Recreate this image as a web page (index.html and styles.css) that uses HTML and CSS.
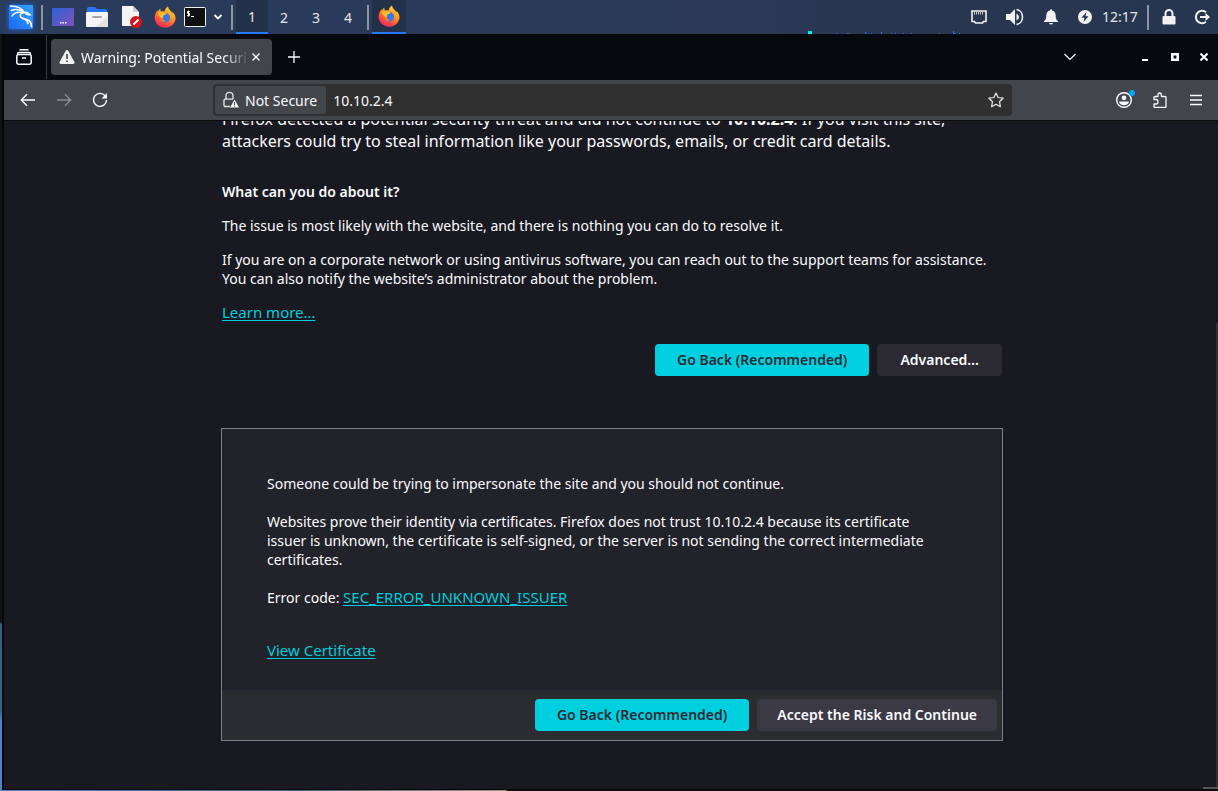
FILE: index.html
```html
<!DOCTYPE html>
<html lang="en">
<head>
    <meta charset="utf-8">
    <title>Warning: Potential Security Risk Ahead</title>
    <link rel="stylesheet" href="styles.css">
</head>
<body>
    <!-- shared icon shapes -->
    <svg class="defs" aria-hidden="true">
        <defs>
            <linearGradient id="kali-bg" x1="0" y1="1" x2="1" y2="0">
                <stop offset="0" stop-color="#1a6cf5"/>
                <stop offset="1" stop-color="#33a0ff"/>
            </linearGradient>
            <linearGradient id="desk-bg" x1="0" y1="0" x2="1" y2="1">
                <stop offset="0" stop-color="#2a63d8"/>
                <stop offset="1" stop-color="#8350b8"/>
            </linearGradient>
            <linearGradient id="fox-body" x1="0.8" y1="0" x2="0.25" y2="1">
                <stop offset="0" stop-color="#ffe040"/>
                <stop offset="0.4" stop-color="#ff9a1f"/>
                <stop offset="0.75" stop-color="#ff4a3d"/>
                <stop offset="1" stop-color="#f0246b"/>
            </linearGradient>
            <symbol id="fox" viewBox="0 0 22 22">
                <path fill="url(#fox-body)" d="M14 .5c.3 2 1.4 3.200 2.700 4.400 1 .9 1.700 1.900 2 2.900 0-.8-.1-1.500-.3-2.100 2 1.900 3.100 4.400 3.100 6.300 0 5.500-4.700 9.700-10.300 9.700S.7 17.500.7 11.700c0-3 1.100-5.600 2.800-7.500l.3 1.400C4.500 4.300 5.400 3.200 6.300 2.500c0 1.300.2 2.200.8 2.900 1-.3 2.500-.2 3.600.1C10.800 3.600 12 1.500 14 .5z"/>
                <circle cx="11" cy="11.800" r="5" fill="#3578ee"/>
                <path fill="#ffbd2e" d="M4 6.500c2-1.200 3.600-.8 5.400.1 1.200.5 2.600.2 3.400 1-.5 1.300-2.800 1.500-3.600 2.500-.5 1 .4 1.900-.8 2.300C5.500 11.700 3.800 9 4 6.500z"/>
                <path fill="#ff7a24" d="M5.600 10.500c1 1.500 2.500 1.600 3.800 1.400-.5 2.100 1.100 3.100 2.700 2.800-1.300 1.800-4.200 1.600-5.500-.1-.8-1.100-1.200-2.600-1-4.100z"/>
            </symbol>
        </defs>
    </svg>

    <!-- desktop panel -->
    <header class="panel">
        <button class="slot kali" aria-label="Applications">
            <svg width="24" height="24" viewBox="0 0 24 24">
                <rect width="24" height="24" rx="1" fill="url(#kali-bg)"/>
                <path fill="none" stroke="#fff" stroke-width="1.400" stroke-linecap="round" d="M1.500 1C7 1 12.500 2.500 15.500 7.500M2.500 5.500C7 3.500 12 5 15.500 7.500M3 11c2.500-3.500 6.500-4.500 10.500-3"/>
                <path fill="none" stroke="#fff" stroke-width="1.600" stroke-linecap="round" d="M15 7.500c2-.8 4.200.3 6 2.300-1.800.3-3-.2-4.200-.9M15 7.500c-3 .5-4.500 2.300-3.300 4.500 1.400 2.300 6 1.500 8.600 3.700 1.600 1.400 2.100 3.500 2.200 6M13.500 13.500c3 .5 5 2 5.500 5"/>
            </svg>
        </button>
        <span class="divider"></span>
        <button class="slot" aria-label="Show desktop">
            <svg width="22" height="18" viewBox="0 0 22 18">
                <rect width="22" height="18" rx="1" fill="url(#desk-bg)"/>
                <path fill="#fff" d="M8 14h1.500v1.500H8zM10.500 14H12v1.500h-1.500zM13 14h1.500v1.500H13z"/>
            </svg>
        </button>
        <button class="slot" aria-label="Files">
            <svg width="22" height="20" viewBox="0 0 22 20">
                <path fill="#2674ef" d="M1 1.500Q1 0 2.500 0H9l2 2h8.500Q21 2 21 3.500V9H1z"/>
                <rect y="5" width="22" height="15" rx="1" fill="#f4f4f4"/>
                <path fill="#e2e2e2" d="M22 9v10q0 1-1 1H10z"/>
                <rect x="6" y="9" width="10" height="2" rx="1" fill="#a5a5a5"/>
            </svg>
        </button>
        <button class="slot" aria-label="Text editor">
            <svg width="22" height="22" viewBox="0 0 22 22">
                <path fill="#f5f5f5" d="M2 0h11l6 6v14H3q-1 0-1-1z"/>
                <path fill="#cfcfcf" d="M13 0v6h6z"/>
                <circle cx="16" cy="16" r="6" fill="#d5161c"/>
                <path d="M13.500 18.500l5-5" stroke="#fff" stroke-width="2"/>
            </svg>
        </button>
        <button class="slot" aria-label="Firefox"><svg width="22" height="22"><use href="#fox"/></svg></button>
        <button class="slot slot-term" aria-label="Terminal">
            <svg width="22" height="20" viewBox="0 0 22 20">
                <rect x="0.500" y="0.500" width="21" height="19" rx="1" fill="#0c1010" stroke="#f0f0f0"/>
                <path fill="none" stroke="#fff" d="M5.800 4.500H3.500v2h2v2.200H3M4.500 3.500v6M7 9.500h3"/>
            </svg>
        </button>
        <button class="slot slot-more" aria-label="More terminals">
            <svg width="10" height="8" viewBox="0 0 10 8"><path d="M1.500 2L5 5.500 8.500 2" fill="none" stroke="#fff" stroke-width="1.800"/></svg>
        </button>
        <span class="divider"></span>
        <nav class="workspaces" aria-label="Workspaces">
            <button class="active">1</button>
            <button>2</button>
            <button>3</button>
            <button>4</button>
        </nav>
        <span class="divider"></span>
        <button class="slot active" aria-label="Firefox window"><svg width="22" height="22"><use href="#fox"/></svg></button>

        <div class="tray">
            <svg class="graph" width="154" height="34" viewBox="0 0 154 34" shape-rendering="crispEdges">
                <path fill="#00f0e0" d="M0 31h4v3H0z"/>
                <path fill="#2a6fe0" d="M28 33h1v1h-1zM39 33h1v1h-1zM41 33h1v1h-1zM57 32h1v2h-1zM63 33h1v1h-1zM73 32h1v2h-1zM83 33h1v1h-1zM87 33h1v1h-1zM95 33h1v1h-1zM103 33h1v1h-1zM131 33h1v1h-1zM145 31h1v2h2v1h-3zM151 33h1v1h-1z"/>
            </svg>
            <button class="slot" aria-label="Network">
                <svg width="16" height="14" viewBox="0 0 16 14">
                    <path fill="none" stroke="#f2f2f2" stroke-width="1.600" d="M1 1h14v10.500h-2.500l-1 1.500h-7l-1-1.500H1z"/>
                    <path stroke="#c4c9d2" d="M3.500 2v2.500M5.500 2v2.500M7.500 2v2.500M9.500 2v2.500M11.500 2v2.500"/>
                </svg>
            </button>
            <button class="slot slot-volume" aria-label="Volume">
                <svg width="18" height="18" viewBox="0 0 18 18">
                    <path fill="#f2f2f2" d="M0 6h4l5-5v16l-5-5H0z"/>
                    <path fill="#f2f2f2" d="M10.500 5.500Q13 7 13 9t-2.500 3.500z"/>
                    <path fill="none" stroke="#f2f2f2" stroke-width="1.600" d="M10.500 1.500C14.500 2 16.500 5.500 16.500 9s-2 7-6 7.500"/>
                </svg>
            </button>
            <button class="slot" aria-label="Notifications">
                <svg width="14" height="16" viewBox="0 0 14 16">
                    <path fill="#f2f2f2" d="M6 1.500V.5h2v1c2.500.4 3.700 2.500 3.700 5 0 3 .6 4.500 2.300 5.500v1H0v-1c1.700-1 2.300-2.500 2.300-5.500 0-2.500 1.200-4.600 3.700-5zM5 14h4q-.5 1.500-2 1.500T5 14z"/>
                </svg>
            </button>
            <button class="slot" aria-label="Power">
                <svg width="14" height="14" viewBox="0 0 14 14">
                    <circle cx="7" cy="7" r="7" fill="#f2f2f2"/>
                    <path fill="#22304a" d="M8.500 2L3.500 7.800h3L5.500 12l5-5.800h-3z"/>
                </svg>
            </button>
            <time class="clock">12:17</time>
            <span class="divider"></span>
            <button class="slot" aria-label="Lock screen">
                <svg width="14" height="16" viewBox="0 0 14 16">
                    <rect x="0.500" y="7" width="13" height="8.500" rx="1" fill="#f2f2f2"/>
                    <path fill="none" stroke="#f2f2f2" stroke-width="2" d="M3.500 8V4.500a3.500 3.500 0 0 1 7 0V8"/>
                </svg>
            </button>
            <button class="slot slot-last" aria-label="Log out">
                <svg width="16" height="16" viewBox="0 0 16 16">
                    <path fill="none" stroke="#f2f2f2" stroke-width="2" d="M12 3.200A6.200 6.200 0 1 0 12 12.800"/>
                    <path fill="#f2f2f2" d="M6 7h5.500V4L16 8l-4.500 4V9H6z"/>
                </svg>
            </button>
        </div>
    </header>

    <div class="window">
        <!-- tabs -->
        <div class="tabbar">
            <button class="recent" aria-label="Recent browsing">
                <svg width="16" height="16" viewBox="0 0 16 16" fill="none" stroke="#fbfbfe" stroke-width="1.500">
                    <path d="M4 .8h8" stroke-linecap="round"/>
                    <path d="M1.500 5q0-1.600 1.500-1.600h10q1.500 0 1.500 1.600"/>
                    <rect x="0.800" y="5.500" width="14.400" height="9.700" rx="2"/>
                    <path d="M6 9h4"/>
                </svg>
            </button>
            <div class="tab">
                <svg width="16" height="16" viewBox="0 0 16 16">
                    <path fill="#f0f0f0" d="M8 1q.9 0 1.400.9l6 11q.7 2-1.200 2.100H1.800Q-.1 14.900.6 12.900l6-11Q7.100 1 8 1z"/>
                    <path stroke="#42454a" stroke-width="1.600" d="M8 5v5M8 11.500V13"/>
                </svg>
                <span class="tab-title">Warning: Potential Security Risk Ahead</span>
                <button class="tab-close" aria-label="Close tab">
                    <svg width="10" height="10" viewBox="0 0 10 10"><path d="M1.500 1.500l7 7M8.500 1.500l-7 7" stroke="#fbfbfe" stroke-width="1.300"/></svg>
                </button>
            </div>
            <button class="new-tab" aria-label="New tab">
                <svg width="12" height="12" viewBox="0 0 12 12"><path d="M6 0v12M0 6h12" stroke="#fbfbfe" stroke-width="1.300"/></svg>
            </button>
            <button class="all-tabs" aria-label="List all tabs">
                <svg width="12" height="8" viewBox="0 0 12 8"><path d="M.5 1L6 6.500 11.500 1" fill="none" stroke="#fbfbfe" stroke-width="1.200"/></svg>
            </button>
            <div class="window-controls">
                <button aria-label="Minimize"><svg width="8" height="8" viewBox="0 0 8 8"><path fill="#fff" d="M1 6h6v2H1z"/></svg></button>
                <button aria-label="Maximize"><svg width="8" height="8" viewBox="0 0 8 8"><path fill="none" stroke="#fff" stroke-width="2.500" d="M1.300 1.300h5.400v5.400H1.300z"/></svg></button>
                <button aria-label="Close"><svg width="8" height="8" viewBox="0 0 8 8"><path stroke="#fff" stroke-width="2" d="M.5.5l7 7M7.500.5l-7 7"/></svg></button>
            </div>
        </div>

        <!-- toolbar -->
        <div class="navbar">
            <button class="tool" aria-label="Back">
                <svg width="16" height="16" viewBox="0 0 16 16" fill="none" stroke="#fbfbfe" stroke-width="1.400"><path d="M15 8H1.500M7 2.300L1.300 8 7 13.700"/></svg>
            </button>
            <button class="tool" aria-label="Forward" disabled>
                <svg width="16" height="16" viewBox="0 0 16 16" fill="none" stroke="#8b8d90" stroke-width="1.400"><path d="M1 8h13.500M9 2.300L14.700 8 9 13.700"/></svg>
            </button>
            <button class="tool" aria-label="Reload">
                <svg width="16" height="16" viewBox="0 0 16 16"><path fill="none" stroke="#fbfbfe" stroke-width="1.400" d="M13 3.700A6.500 6.500 0 1 0 14.500 8"/><path fill="#fbfbfe" d="M15 1v5.500H9.500z"/></svg>
            </button>
            <div class="urlbar">
                <button class="identity">
                    <svg width="16" height="18" viewBox="0 0 16 18">
                        <path fill="none" stroke="#e8e8e8" stroke-width="1.300" d="M3 8V4.800a3.500 3.500 0 0 1 7 0V8M7 15.500H2.300Q1 15.500 1 14.200V9.500Q1 8.200 2.300 8.200H10"/>
                        <path fill="#f5f5f5" d="M11.500 8.500l4.500 8H7z"/>
                        <path stroke="#43464b" d="M11.500 11v3M11.500 14.700v1"/>
                    </svg>
                    Not Secure
                </button>
                <input class="address" type="text" value="10.10.2.4" aria-label="Address">
                <button class="bookmark" aria-label="Bookmark this page">
                    <svg width="16" height="16" viewBox="0 0 16 16"><path fill="none" stroke="#e8e8e8" stroke-width="1.200" stroke-linejoin="round" d="M8 1l2.100 4.500 5 .7-3.600 3.500.9 5L8 12.300l-4.400 2.400.9-5L.9 6.200l5-.7z"/></svg>
                </button>
            </div>
            <button class="tool" aria-label="Account">
                <svg width="22" height="20" viewBox="-1 0 22 20">
                    <circle cx="10" cy="10" r="7.300" fill="none" stroke="#fbfbfe" stroke-width="1.400"/>
                    <circle cx="10" cy="7.800" r="2.400" fill="#fbfbfe"/>
                    <path fill="#fbfbfe" d="M5 11.500h10q-.8 3.800-5 3.800T5 11.500z"/>
                    <circle cx="18" cy="3" r="3" fill="#00a6ff"/>
                </svg>
            </button>
            <button class="tool" aria-label="Extensions">
                <svg width="16" height="16" viewBox="0 0 16 16"><path fill="none" stroke="#fbfbfe" stroke-width="1.300" stroke-linejoin="round" d="M2 7V5.500Q2 4.500 3 4.500h3V3q0-2 1.700-2T9.400 3v1.500H13q1 0 1 1v9q0 1-1 1H3q-1 0-1-1V12h2.500Q6 12 6 9.800T4.500 7.500H2z"/></svg>
            </button>
            <button class="tool" aria-label="Menu">
                <svg width="16" height="16" viewBox="0 0 16 16"><path stroke="#fbfbfe" stroke-width="1.300" d="M2 3.500h12M2 8h12M2 12.500h12"/></svg>
            </button>
        </div>

        <!-- error page -->
        <main class="page">
            <div class="content">
                <p class="intro">Firefox detected a potential security threat and did not continue to <b>10.10.2.4</b>. If you visit this site, attackers could try to steal information like your passwords, emails, or credit card details.</p>
                <h2>What can you do about it?</h2>
                <p>The issue is most likely with the website, and there is nothing you can do to resolve it.</p>
                <p>If you are on a corporate network or using antivirus software, you can reach out to the support teams for assistance. You can also notify the website’s administrator about the problem.</p>
                <p><a href="#">Learn more…</a></p>
                <div class="buttons">
                    <button class="btn btn-primary">Go Back (Recommended)</button>
                    <button class="btn">Advanced…</button>
                </div>
            </div>

            <section class="advanced">
                <div class="advanced-text">
                    <p>Someone could be trying to impersonate the site and you should not continue.</p>
                    <p>Websites prove their identity via certificates. Firefox does not trust 10.10.2.4 because its certificate issuer is unknown, the certificate is self-signed, or the server is not sending the correct intermediate certificates.</p>
                    <p>Error code: <a href="#">SEC_ERROR_UNKNOWN_ISSUER</a></p>
                    <p class="certificate"><a href="#">View Certificate</a></p>
                </div>
                <div class="buttons advanced-buttons">
                    <button class="btn btn-primary">Go Back (Recommended)</button>
                    <button class="btn btn-light">Accept the Risk and Continue</button>
                </div>
            </section>
            <span class="scroll-thumb"></span>
            <span class="scroll-corner"></span>
        </main>
    </div>
</body>
</html>
```
FILE: styles.css
```css
* {
    box-sizing: border-box;
}
body {
    display: flex;
    flex-direction: column;
    height: 100vh;
    margin: 0;
    overflow: hidden;
    background: linear-gradient(#101214 622px, #2e6088 624px, #33658c 712px, #4a86c6 722px) 0 0 / 2px 100% no-repeat, linear-gradient(90deg, #4a86c6, #3a6a98 300px, #a0977c 506px, #101112 507px) 0 100% / 100% 1px no-repeat, #050608;
    color: #fbfbfe;
    font-family: "Noto Sans", sans-serif;
    font-size: 14px;
    line-height: 19px;
}
button, input {
    margin: 0;
    padding: 0;
    border: 0;
    background: none;
    color: inherit;
    font: inherit;
}
button {
    display: flex;
    align-items: center;
    justify-content: center;
}
svg {
    display: block;
    flex: none;
}
.defs {
    position: absolute;
    width: 0;
    height: 0;
}

/* desktop panel */
.panel {
    display: flex;
    flex: none;
    height: 34px;
    padding-left: 4px;
    background: linear-gradient(90deg, #2a3c5c, #2b3857 60%, #29364f 80%, #263650);
}
.slot {
    width: 34px;
    height: 34px;
}
.kali svg {
    box-shadow: 0 0 5px #1f6fff;
}
.slot-term {
    width: 26px;
}
.slot-more {
    width: 20px;
}
.slot-volume {
    width: 38px;
}
.slot-last {
    width: 32px;
}
.divider {
    width: 2px;
    height: 25px;
    margin: 5px 3px;
    background: #8d94a0;
}
.workspaces {
    display: flex;
    color: #e4e6ea;
}
.workspaces button {
    width: 32px;
}
.panel .active {
    background: #22304a;
    border-bottom: 2px solid #2777ff;
}
.tray {
    display: flex;
    margin-left: auto;
}
.clock {
    width: 42px;
    line-height: 34px;
    color: #e4e6ea;
}

/* browser window */
.window {
    display: flex;
    flex: 1;
    flex-direction: column;
    min-height: 0;
    margin: 0 0 2px 4px;
}
.tabbar {
    display: flex;
    flex: none;
    align-items: center;
    height: 46px;
    background: #060a0e;
}
.recent {
    width: 43px;
    height: 44px;
    padding-right: 2px;
    border-right: 1px solid #3c3f43;
}
.tab {
    display: flex;
    align-items: center;
    width: 221px;
    height: 36px;
    margin-left: 4px;
    padding: 0 9px 0 8px;
    border-radius: 4px;
    background: #42454a;
}
.tab-title {
    flex: 1;
    margin-left: 6px;
    overflow: hidden;
    white-space: nowrap;
    mask-image: linear-gradient(90deg, #000 85%, transparent);
}
.tab-close {
    width: 14px;
    height: 20px;
}
.new-tab {
    width: 36px;
    height: 36px;
    margin-left: 4px;
}
.all-tabs {
    width: 36px;
    height: 36px;
    margin-left: auto;
}
.window-controls {
    display: flex;
    margin-left: 42px;
}
.window-controls button {
    width: 30px;
    height: 30px;
}
.window-controls button:last-child {
    width: 28px;
}
.navbar {
    display: flex;
    flex: none;
    align-items: center;
    height: 41px;
    padding: 0 4px 0 6px;
    border-bottom: 1px solid #0c0c0d;
    background: #42454a;
}
.tool {
    width: 36px;
    height: 32px;
}
.urlbar {
    display: flex;
    flex: 1;
    align-items: center;
    height: 32px;
    margin: 0 94px 0 95px;
    padding: 2px;
    border-radius: 4px;
    background: #303030;
}
.identity {
    gap: 6px;
    height: 28px;
    padding: 0 9px 0 8px;
    border-radius: 3px;
    background: #43464b;
}
.address {
    flex: 1;
    min-width: 0;
    padding-left: 7px;
}
.bookmark {
    width: 28px;
    height: 28px;
}

/* error page */
.page {
    position: relative;
    display: flex;
    flex: 1;
    flex-direction: column;
    justify-content: flex-end;
    align-items: center;
    min-height: 0;
    padding: 0 0 48px 2px;
    overflow: hidden;
    background: #191a21;
}
.page p {
    margin: 0 0 15px;
}
.content {
    width: 100%;
    max-width: 780px;
}
.page .intro {
    margin-bottom: 30px;
    font-size: 16px;
    line-height: 22px;
}
h2 {
    margin: 0 0 15px;
    font-size: 14px;
    font-weight: 600;
}
a {
    color: #00cddb;
    font-size: 15px;
    text-underline-offset: 2px;
}
.buttons {
    display: flex;
    justify-content: flex-end;
    gap: 8px;
    margin-top: 22px;
}
.btn {
    height: 32px;
    padding: 0 23px 2px;
    border-radius: 4px;
    background: #2b2a33;
    font-weight: 600;
}
.btn-primary {
    padding: 0 22px 2px;
    background: #00cfe0;
    color: #2b2a33;
}
.btn-light {
    padding: 0 20px 2px;
    background: #3a3944;
}
.advanced {
    width: 100%;
    max-width: 782px;
    margin-top: 52px;
    border: 1px solid #80808a;
    background: #22222a;
}
.advanced-text {
    padding: 45px 60px 30px 45px;
}
.advanced-text p {
    margin-bottom: 19px;
}
.advanced-text .certificate {
    margin: 34px 0 0;
}
.advanced-buttons {
    margin: 0;
    padding: 9px 5px;
    background: #2a2c30;
}
.scroll-thumb {
    position: absolute;
    top: 202px;
    right: 0;
    bottom: 2px;
    width: 2px;
    background: #303032;
}
.scroll-corner {
    position: absolute;
    right: 0;
    bottom: 0;
    width: 15px;
    height: 2px;
    background: #56565a;
}
```
